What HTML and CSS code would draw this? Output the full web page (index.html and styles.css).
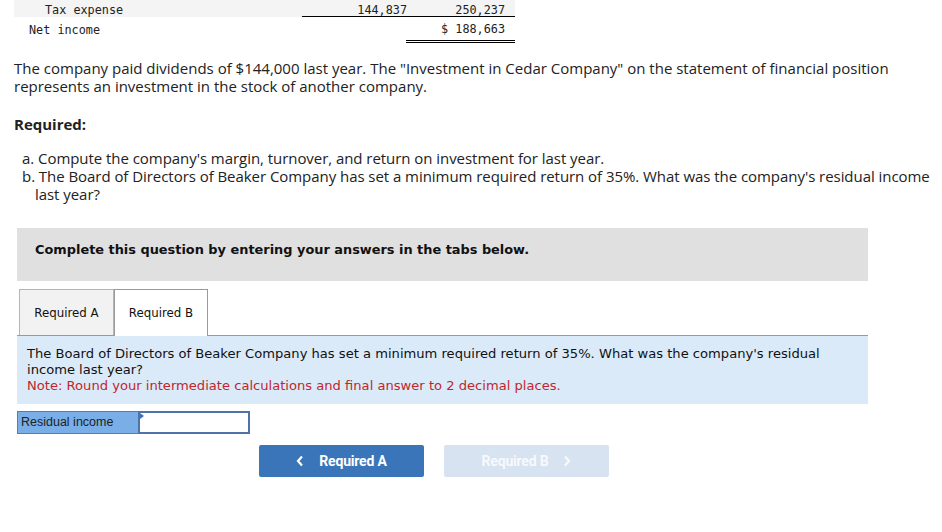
FILE: index.html
```html
<!DOCTYPE html>
<html>
<head>
<meta charset="utf-8">
<link rel="stylesheet" href="styles.css">
</head>
<body>
<div class="page">
  <div class="fin">
    <div class="fin-row shaded">
      <div class="lbl indent2">Tax expense</div>
      <div class="num line">144,837</div>
      <div class="num line">250,237</div>
    </div>
    <div class="fin-row second">
      <div class="lbl indent1">Net income</div>
      <div class="num"></div>
      <div class="num dbl">$ 188,663</div>
    </div>
  </div>

  <p class="intro">The company paid dividends of $144,000 last year. The "Investment in Cedar Company" on the statement of financial position represents an investment in the stock of another company.</p>

  <p class="req">Required:</p>
  <ol class="parts">
    <li>a. Compute the company's margin, turnover, and return on investment for last year.</li>
    <li>b. The Board of Directors of Beaker Company has set a minimum required return of 35%. What was the company's residual income last year?</li>
  </ol>

  <div class="instr">Complete this question by entering your answers in the tabs below.</div>

  <div class="tabs">
    <div class="tab tab-a">Required A</div>
    <div class="tab tab-b active">Required B</div>
  </div>
  <div class="panel">
    <div>The Board of Directors of Beaker Company has set a minimum required return of 35%. What was the company's residual income last year?</div>
    <div class="note">Note: Round your intermediate calculations and final answer to 2 decimal places.</div>
  </div>

  <div class="answer">
    <div class="ans-label">Residual income</div>
    <div class="ans-input"><span class="flag"></span></div>
  </div>

  <div class="nav">
    <div class="btn prev"><svg class="chev" width="8" height="12" viewBox="0 0 8 12"><path d="M6 1.5 L2 6 L6 10.5" fill="none" stroke="currentColor" stroke-width="2.2"/></svg>Required A</div>
    <div class="btn next">Required B<svg class="chev" width="8" height="12" viewBox="0 0 8 12"><path d="M2 1.5 L6 6 L2 10.5" fill="none" stroke="currentColor" stroke-width="2.2"/></svg></div>
  </div>
</div>
</body>
</html>
```

FILE: styles.css
```css
html, body {
  margin: 0;
  padding: 0;
  background: #fff;
}
.page {
  padding: 0 6px 0 14px;
  width: 922px;
  font-family: "Open Sans", "Lato", sans-serif;
  color: #222;
}
.fin {
  width: 501px;
  font-family: "DejaVu Sans Mono", "Liberation Mono", monospace;
  font-size: 11.8px;
  color: #222;
}
.fin-row {
  display: grid;
  grid-template-columns: 288px 106px 107px;
}
.fin-row.shaded {
  background: #f4f4f4;
  height: 17px;
}
.fin-row.shaded > div {
  line-height: 15px;
  padding-top: 3px;
}
.fin-row.second > div {
  line-height: 19px;
  height: 20px;
  padding-top: 3px;
}
.lbl.indent2 { padding-left: 31px; }
.fin-row.second > .lbl.indent1 {
  padding-left: 15px;
  padding-top: 4px;
  height: 19px;
}
.num {
  text-align: right;
  padding-right: 10px;
}
.num.line {
  border-bottom: 1px solid #000;
  box-sizing: border-box;
  height: 17px;
}
.fin-row.shaded .num.line:nth-child(2) { padding-right: 1px; }
.num.dbl {
  border-bottom: 3px double #000;
  margin-left: -2px;
}
.intro {
  margin: 16px 0 0 0;
  font-size: 15px;
  line-height: 18px;
}
.req {
  margin: 20px 0 0 0;
  font-weight: bold;
  font-size: 15px;
  line-height: 18px;
}
.parts {
  list-style: none;
  margin: 16px 0 0 0;
  padding: 0 0 0 8px;
  font-size: 15px;
  line-height: 18px;
  letter-spacing: -0.05px;
}
.parts li {
  padding-left: 13px;
  text-indent: -13px;
}
.instr {
  margin: 25px 0 0 3px;
  width: 851px;
  height: 53px;
  box-sizing: border-box;
  background: #e0e0e0;
  padding: 13px 18px;
  font-family: "DejaVu Sans", sans-serif;
  font-weight: bold;
  font-size: 12.9px;
  line-height: 18px;
  color: #111;
}
.tabs {
  display: flex;
  margin: 8px 0 0 3px;
  width: 851px;
  border-bottom: 1px solid #9a9a9a;
  padding-left: 2px;
  box-sizing: border-box;
}
.tab {
  height: 46px;
  display: flex;
  align-items: center;
  justify-content: center;
  box-sizing: border-box;
  font-family: "DejaVu Sans", sans-serif;
  font-size: 11.8px;
  color: #111;
  background: #f2f2f2;
  border: 1px solid #b5b5b5;
  border-bottom: none;
}
.tab-a { width: 95px; }
.tab-b { width: 94px; }
.tab.active {
  background: #fff;
  border-color: #9a9a9a;
  margin-bottom: -1px;
  height: 47px;
}
.panel {
  margin-left: 3px;
  width: 851px;
  box-sizing: border-box;
  background: #dbeaf8;
  padding: 10px 10px 10px 10px;
  font-family: "DejaVu Sans", sans-serif;
  font-size: 13.1px;
  line-height: 16px;
  color: #111;
}
.note { color: #c0272d; }
.answer {
  display: flex;
  margin: 7px 0 0 3px;
  height: 23px;
}
.ans-label {
  width: 121px;
  box-sizing: border-box;
  background: #79aee6;
  border: 1px solid #777;
  border-right: none;
  font-family: "Liberation Sans", sans-serif;
  font-size: 12.5px;
  line-height: 21px;
  padding-left: 3px;
  color: #222;
}
.ans-input {
  position: relative;
  width: 112px;
  box-sizing: border-box;
  background: #fff;
  border: 2px solid #4f73a8;
}
.flag {
  position: absolute;
  left: 0;
  top: 0;
  width: 0;
  height: 0;
  border-top: 3px solid transparent;
  border-bottom: 3px solid transparent;
  border-left: 4px solid #3b74bb;
}
.nav {
  display: flex;
  gap: 20px;
  margin: 11px 0 0 245px;
}
.btn {
  width: 165px;
  height: 32px;
  border-radius: 2px;
  display: flex;
  align-items: center;
  justify-content: center;
  gap: 15px;
  font-family: "Roboto", sans-serif;
  font-weight: bold;
  font-size: 14px;
  letter-spacing: -0.2px;
  color: #fff;
}
.btn.prev { background: #3a75b9; }
.btn.next { background: #d7e3f1; color: #f7f9fc; }
.chev { display: block; }
```
